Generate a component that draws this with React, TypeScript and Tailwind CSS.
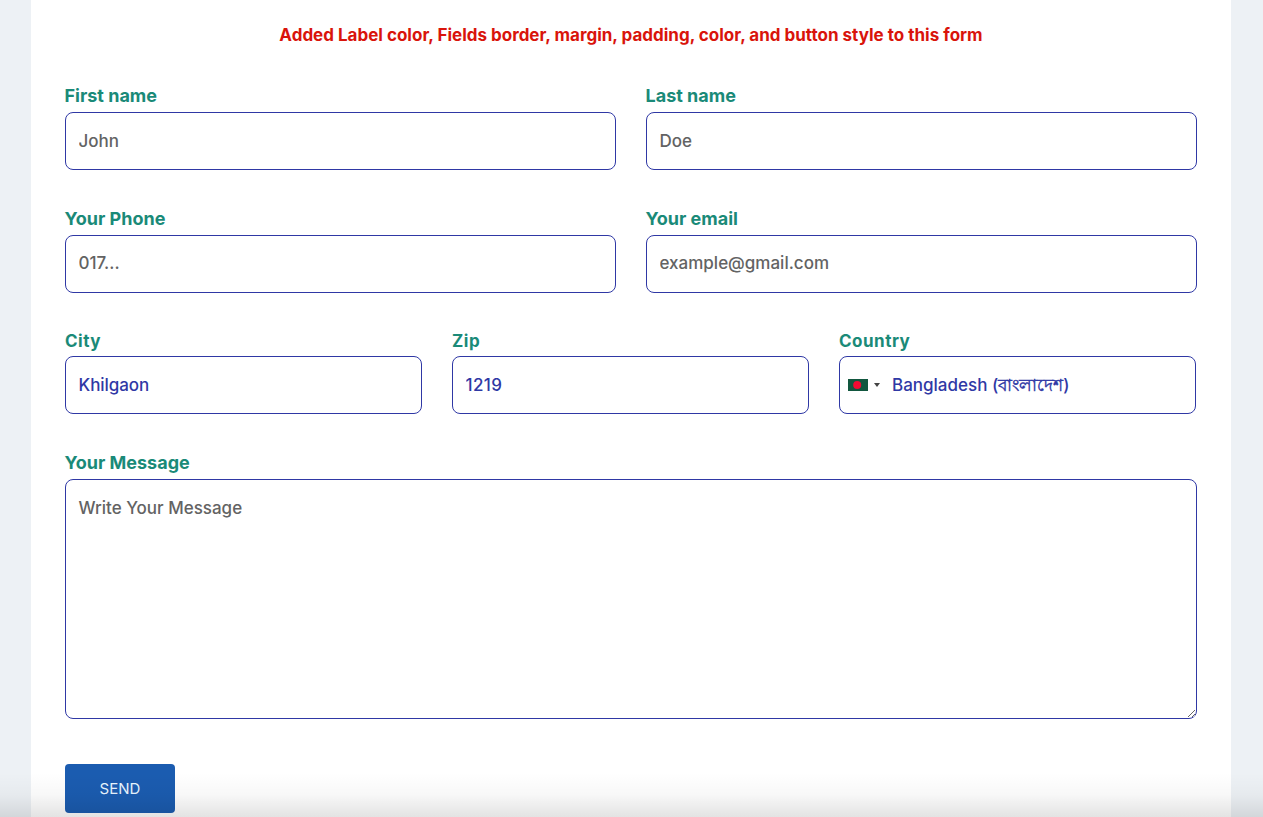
import { clsx } from "clsx";

import type { ReactNode } from "react";

type FieldProps = {
  id: string
  label: string
  compact?: boolean
  children: ReactNode
}

const control = "block w-full rounded-lg border border-[#2f38a5] bg-white px-[12.5px] text-[17px] text-[#2f38a5] outline-none placeholder:text-[#636363] placeholder:opacity-100";

function Field({ id, label, compact, children }: FieldProps) {
  return (
    <div className={clsx("flex flex-col", compact ? "gap-[3px]" : "gap-1")}>
      <label
        htmlFor={id}
        className={clsx(
          "leading-6 font-bold text-[#1a8a78]",
          compact ? "pt-px text-[17px] leading-[23px] tracking-[0.5px]" : "-ml-px pl-[0.5px] text-[18px]"
        )}
      >
        {label}
      </label>
      {children}
    </div>
  );
}

function Flag() {
  return (
    <svg width="20" height="12" viewBox="0 0 20 12">
      <rect width="20" height="12" fill="#12573f" />
      <circle cx="9.2" cy="6" r="4" fill="#f30b33" />
    </svg>
  );
}

export default function App() {
  return (
    <div className="relative h-[817px] overflow-hidden bg-[#edf1f5] font-[Inter,'Noto_Sans',sans-serif]">
      <main className="ml-[31px] h-full w-[1200px] bg-white px-[34px] pt-[23px]">
        <h2 className="text-center text-[17px] leading-6 font-bold text-[#d9140b]">
          Added Label color, Fields border, margin, padding, color, and button style to this form
        </h2>

        <form className="mt-[37px]">
          <div className="grid grid-cols-2 gap-x-[30px] gap-y-[37px]">
            <Field id="first" label="First name">
              <input id="first" className={clsx(control, "h-[58px] font-[450]")} placeholder="John" />
            </Field>
            <Field id="last" label="Last name">
              <input id="last" className={clsx(control, "h-[58px] font-[450]")} placeholder="Doe" />
            </Field>
            <Field id="phone" label="Your Phone">
              <input id="phone" className={clsx(control, "h-[58px] pb-0.5 font-[450]")} placeholder="017..." />
            </Field>
            <Field id="email" label="Your email">
              <input id="email" className={clsx(control, "h-[58px] pb-0.5 font-[450]")} placeholder="example@gmail.com" />
            </Field>
          </div>

          <div className="mt-9 mr-px grid grid-cols-3 gap-x-[30px]">
            <Field id="city" label="City" compact>
              <input id="city" className={clsx(control, "h-[58px] font-medium tracking-[-0.05px]")} defaultValue="Khilgaon" />
            </Field>
            <Field id="zip" label="Zip" compact>
              <input id="zip" className={clsx(control, "h-[58px] font-medium tracking-[0.4px]")} defaultValue="1219" />
            </Field>
            <Field id="country" label="Country" compact>
              <button
                id="country"
                type="button"
                className="flex h-[58px] items-center rounded-lg border border-[#2f38a5] pl-2 text-[17px] font-medium text-[#2f38a5]"
              >
                <Flag />
                <svg className="ml-1.5" width="6" height="4" viewBox="0 0 6 4">
                  <path d="M0 0h6L3 4z" fill="#444" />
                </svg>
                <span className="ml-3 leading-6 whitespace-pre">
                  Bangladesh (<span className="[-webkit-text-stroke:0.45px]">বাংলাদেশ</span>)
                </span>
              </button>
            </Field>
          </div>

          <div className="mt-[37px]">
            <Field id="message" label="Your Message">
              <textarea
                id="message"
                className={clsx(control, "h-60 resize-y pt-4 leading-6 font-[450]")}
                placeholder="Write Your Message"
              />
            </Field>
          </div>

          <button
            type="button"
            className="mt-[45px] block h-[49px] w-[110px] rounded bg-[#1b5cb0] pt-px text-[15px] text-[#e8f5ff]"
          >
            SEND
          </button>
        </form>
      </main>

      <div className="pointer-events-none absolute inset-x-0 bottom-0 h-11 bg-linear-to-b from-transparent via-black/3 to-black/11" />
    </div>
  );
}
